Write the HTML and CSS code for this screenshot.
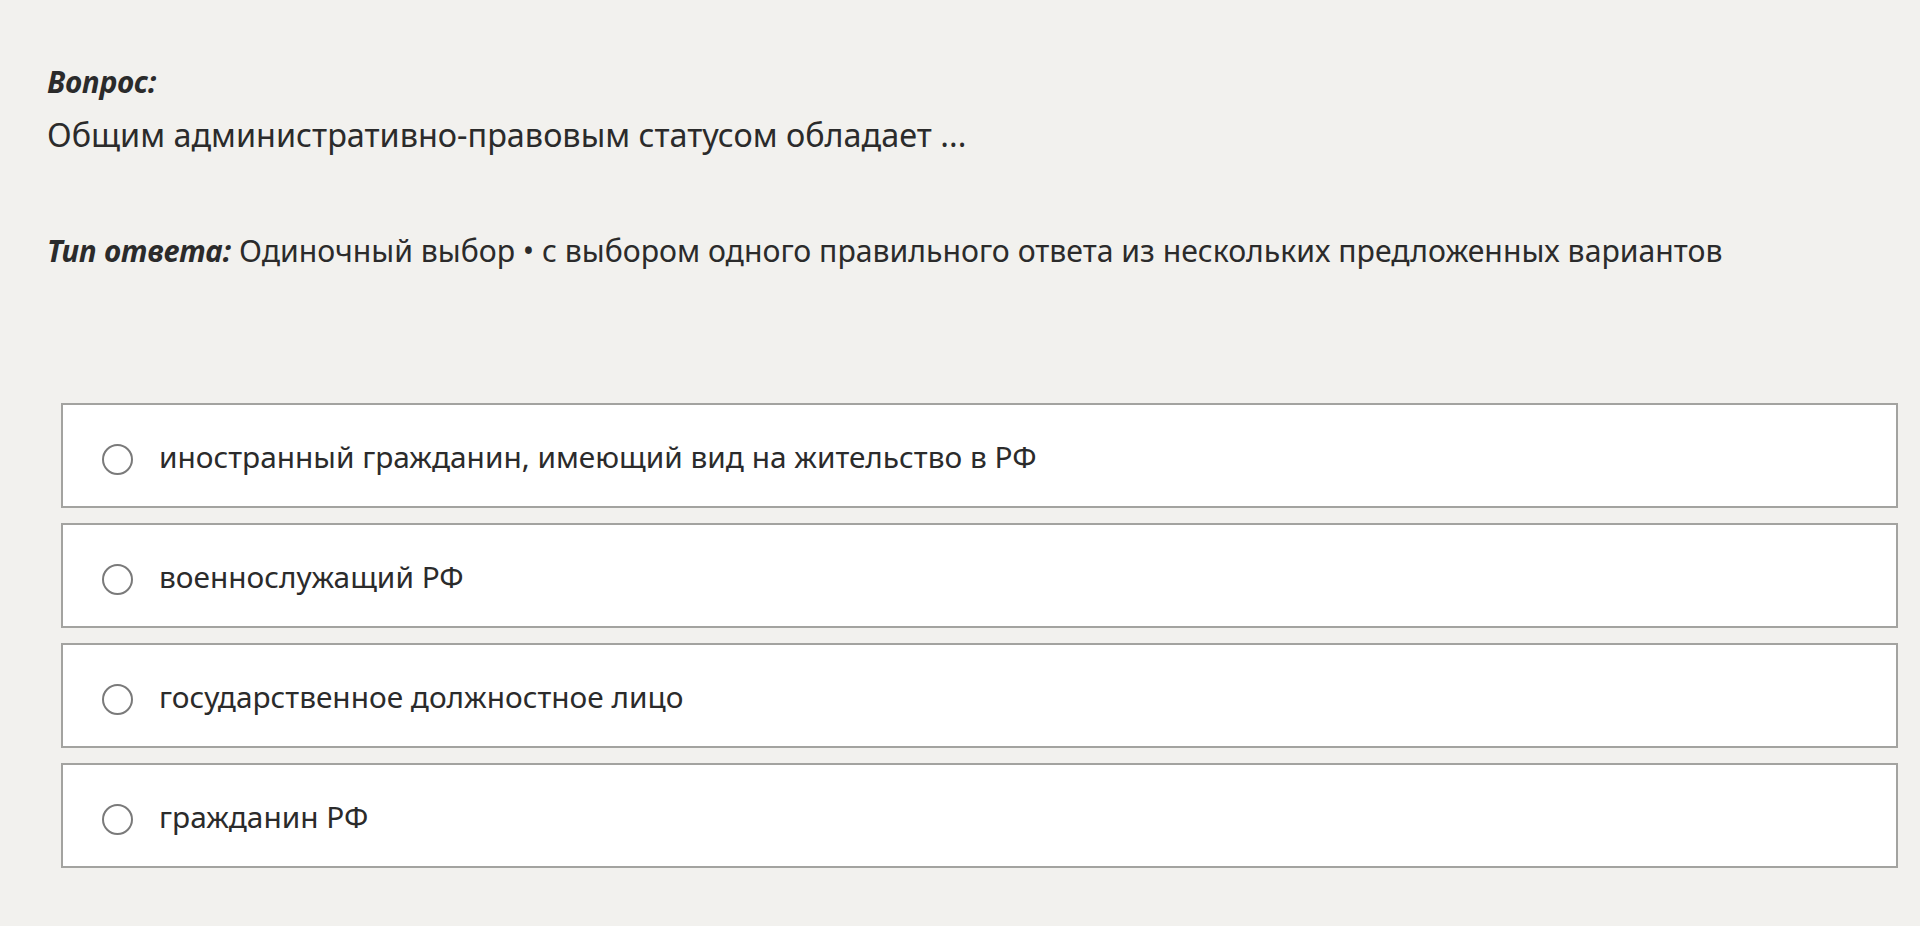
FILE: index.html
```html
<!DOCTYPE html>
<html lang="ru">
<head>
  <meta charset="UTF-8">
  <meta name="viewport" content="width=device-width, initial-scale=1.0">
  <title>Вопрос</title>
  <link rel="stylesheet" href="styles.css">
</head>
<body>
  <div class="page">
    <!-- Question -->
    <div class="question">
      <div class="label">Вопрос:</div>
      <div class="question-text">Общим административно-правовым статусом обладает ...</div>
    </div>

    <div class="answer-type">
      <span class="label">Тип ответа:</span> Одиночный выбор • с выбором одного правильного ответа из нескольких предложенных вариантов
    </div>

    <!-- Options -->
    <div class="options">
      <label class="option">
        <span class="radio"></span>
        <span class="option-text">иностранный гражданин, имеющий вид на жительство в РФ</span>
      </label>
      <label class="option">
        <span class="radio"></span>
        <span class="option-text">военнослужащий РФ</span>
      </label>
      <label class="option">
        <span class="radio"></span>
        <span class="option-text">государственное должностное лицо</span>
      </label>
      <label class="option">
        <span class="radio"></span>
        <span class="option-text">гражданин РФ</span>
      </label>
    </div>
  </div>
</body>
</html>
```

FILE: styles.css
```css
/* Basic Reset */
* {
  margin: 0;
  padding: 0;
  box-sizing: border-box;
}

body {
  font-family: "Noto Sans", "Open Sans", sans-serif;
  font-size: 32px;
  line-height: 45px;
  background: #f2f1ee;
  color: #2b2b2b;
  height: 100vh;
  overflow: hidden;
}

.page {
  padding: 59px 22px 0 47px;
}

.label {
  font-size: 29.5px;
  font-weight: 700;
  font-style: italic;
}

.question-text {
  margin-top: 8px;
  font-size: 32.4px;
}

.answer-type {
  margin-top: 71px;
  font-size: 30.2px;
}

.options {
  margin-top: 130px;
  margin-left: 14px;
  display: flex;
  flex-direction: column;
  gap: 15px;
}

.option {
  display: flex;
  align-items: center;
  height: 105px;
  padding-left: 39px;
  background: #fff;
  border: 2px solid #a3a3a0;
  cursor: pointer;
}

.option-text {
  font-size: 29.8px;
  margin-top: 1px;
}

.radio {
  flex: none;
  width: 31px;
  height: 31px;
  margin-top: 8px;
  margin-right: 26px;
  border: 2px solid #7a7a7a;
  border-radius: 50%;
}
```
